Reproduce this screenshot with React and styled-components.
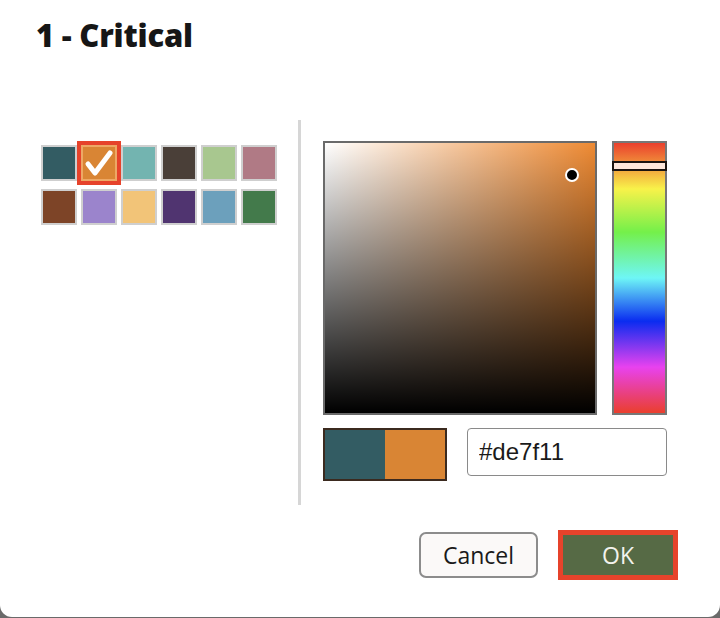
import React from "react";
import styled, { createGlobalStyle } from "styled-components";

const GlobalStyle = createGlobalStyle`
    html, body {
        margin: 0;
        padding: 0;
        background: #6a6a6a;
    }
    body {
        font-family: "Open Sans", "Liberation Sans", sans-serif;
    }
`;

const Dialog = styled.div`
    width: 720px;
    height: 617px;
    background: #ffffff;
    border-radius: 0 0 12px 12px;
    display: flex;
    flex-direction: column;
    box-sizing: border-box;
`;

const Title = styled.h1`
    margin: 0;
    padding: 14px 0 0 36px;
    height: 120px;
    box-sizing: border-box;
    font-family: "Open Sans", sans-serif;
    font-weight: 800;
    font-size: 31px;
    letter-spacing: -0.2px;
    color: #161616;
`;

const Body = styled.div`
    display: flex;
    height: 385px;
`;

const SwatchPanel = styled.div`
    width: 257px;
    padding: 25px 0 0 41px;
`;

const SwatchGrid = styled.div`
    display: grid;
    grid-template-columns: repeat(6, 36px);
    grid-auto-rows: 36px;
    column-gap: 4px;
    row-gap: 8px;
`;

const Swatch = styled.div`
    box-sizing: border-box;
    width: 36px;
    height: 36px;
    background: ${p => p.color};
    border: 2px solid ${p => (p.selected ? "#eda865" : "#cfcfcf")};
    box-shadow: ${p => (p.selected ? "0 0 0 4px #e6432b" : "none")};
    display: flex;
    align-items: center;
    justify-content: center;
`;

const Divider = styled.div`
    width: 3px;
    background: #d6d6d6;
`;

const PickerPanel = styled.div`
    padding: 21px 0 0 22px;
    display: flex;
    flex-direction: column;
    gap: 13px;
`;

const PickerRow = styled.div`
    display: flex;
    gap: 15px;
`;

const SatValue = styled.div`
    position: relative;
    box-sizing: border-box;
    width: 274px;
    height: 274px;
    border: 2px solid #6a6a6a;
    background: linear-gradient(to top, #000, rgba(0, 0, 0, 0)),
        linear-gradient(to right, #fff, rgba(255, 255, 255, 0)), #ee8a33;
`;

const Cursor = styled.div`
    position: absolute;
    left: 240px;
    top: 25px;
    width: 10px;
    height: 10px;
    border-radius: 50%;
    background: #000;
    border: 2px solid #fff;
`;

const HueBar = styled.div`
    position: relative;
    box-sizing: border-box;
    width: 55px;
    height: 274px;
    border: 2px solid #777;
    background: linear-gradient(
        to bottom,
        #ea3f2d 0%,
        #f8f24a 17%,
        #74f04a 33%,
        #6ef6f6 50%,
        #0a2cf0 66%,
        #e842ef 83%,
        #ea3f2d 100%
    );
`;

const HueHandle = styled.div`
    position: absolute;
    left: -2px;
    right: -2px;
    top: 18px;
    height: 10px;
    box-sizing: border-box;
    border: 2px solid #1b1410;
    background: #fde6da;
`;

const ValueRow = styled.div`
    display: flex;
    align-items: flex-start;
    gap: 20px;
`;

const Preview = styled.div`
    box-sizing: border-box;
    width: 124px;
    height: 53px;
    border: 2px solid #3b2a1f;
    display: flex;
`;

const PreviewHalf = styled.div`
    flex: 1;
    background: ${p => p.color};
`;

const HexInput = styled.input`
    box-sizing: border-box;
    width: 200px;
    height: 48px;
    border: 1.5px solid #8a8a8a;
    border-radius: 4px;
    padding: 0 0 0 11px;
    font-family: "Liberation Sans", Arial, sans-serif;
    font-size: 24px;
    color: #1a1a1a;
    outline: none;
`;

const Footer = styled.div`
    display: flex;
    justify-content: flex-end;
    align-items: center;
    gap: 20px;
    padding: 25px 42px 0 0;
`;

const Button = styled.button`
    box-sizing: border-box;
    font-family: "Open Sans", sans-serif;
    font-size: 23px;
    cursor: pointer;
    display: flex;
    align-items: center;
    justify-content: center;
    padding: 0;
`;

const CancelButton = styled(Button)`
    width: 119px;
    height: 46px;
    background: #fbf9f8;
    color: #1a1a1a;
    border: 2px solid #8c8c8c;
    border-radius: 7px;
`;

const OkButton = styled(Button)`
    width: 120px;
    height: 50px;
    background: #566a45;
    color: #f2f2ec;
    border: 5px solid #e6432b;
    border-radius: 0;
`;

const swatches = [
    "#335c63",
    "#d98534",
    "#73b4b0",
    "#4a3f38",
    "#a8c78f",
    "#b07a85",
    "#7d4427",
    "#9b84cc",
    "#f2c478",
    "#503470",
    "#6ca0bc",
    "#437a4b"
];

const Check = () => (
    <svg width="30" height="30" viewBox="0 0 30 30">
        <path
            d="M4 16 L11 25 L26 5"
            fill="none"
            stroke="#ffffff"
            strokeWidth="5"
            strokeLinecap="round"
            strokeLinejoin="round"
        />
    </svg>
);

export default function App() {
    const selected = 1;

    return (
        <>
            <GlobalStyle />
            <Dialog>
                <Title>1 - Critical</Title>
                <Body>
                    <SwatchPanel>
                        <SwatchGrid>
                            {swatches.map((c, i) => (
                                <Swatch key={c} color={c} selected={i === selected}>
                                    {i === selected && <Check />}
                                </Swatch>
                            ))}
                        </SwatchGrid>
                    </SwatchPanel>
                    <Divider />
                    <PickerPanel>
                        <PickerRow>
                            <SatValue>
                                <Cursor />
                            </SatValue>
                            <HueBar>
                                <HueHandle />
                            </HueBar>
                        </PickerRow>
                        <ValueRow>
                            <Preview>
                                <PreviewHalf color="#335c63" />
                                <PreviewHalf color="#d98534" />
                            </Preview>
                            <HexInput defaultValue="#de7f11" />
                        </ValueRow>
                    </PickerPanel>
                </Body>
                <Footer>
                    <CancelButton>Cancel</CancelButton>
                    <OkButton>OK</OkButton>
                </Footer>
            </Dialog>
        </>
    );
}
